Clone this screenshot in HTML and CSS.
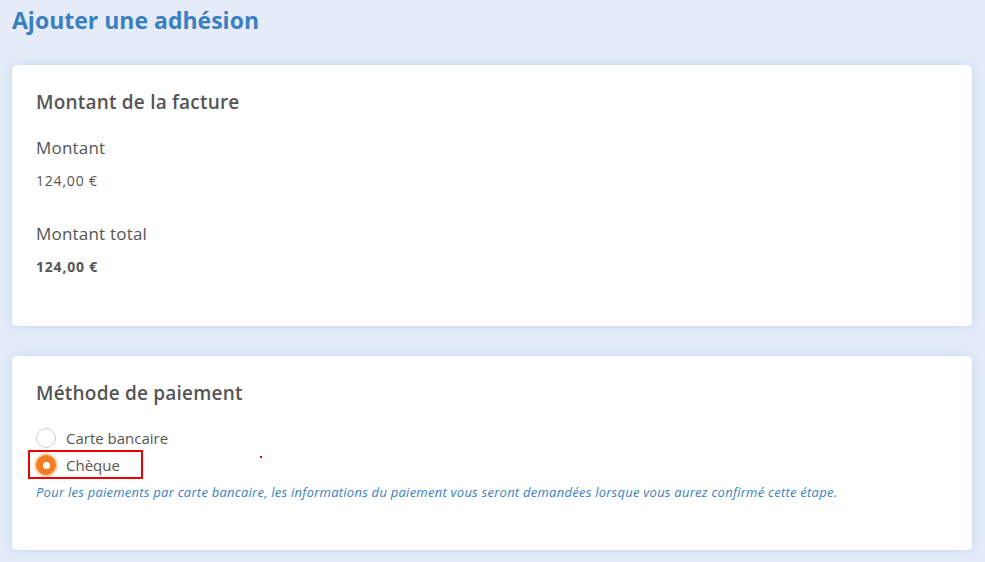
FILE: index.html
```html
<!DOCTYPE html>
<html lang="fr">
<head>
    <meta charset="UTF-8">
    <meta name="viewport" content="width=device-width, initial-scale=1.0">
    <title>Ajouter une adhésion</title>
    <link rel="stylesheet" href="styles.css">
</head>
<body>
    <div class="page">
        <h1 class="page-title">Ajouter une adhésion</h1>

        <!-- Montant -->
        <section class="card">
            <h2>Montant de la facture</h2>
            <div class="field">
                <div class="field-label">Montant</div>
                <div class="field-value">124,00 €</div>
            </div>
            <div class="field">
                <div class="field-label">Montant total</div>
                <div class="field-value strong">124,00 €</div>
            </div>
        </section>

        <!-- Paiement -->
        <section class="card card-pay">
            <h2>Méthode de paiement</h2>
            <div class="radios">
                <label class="radio">
                    <span class="radio-dot"></span>
                    <span>Carte bancaire</span>
                </label>
                <div class="radio-row">
                    <label class="radio checked focused">
                        <span class="radio-dot"></span>
                        <span>Chèque</span>
                    </label>
                    <span class="marker"></span>
                </div>
            </div>
            <p class="help">Pour les paiements par carte bancaire, les informations du paiement vous seront demandées lorsque vous aurez confirmé cette étape.</p>
        </section>
    </div>
</body>
</html>
```

FILE: styles.css
```css
body {
    margin: 0;
    font-family: "Open Sans", Lato, sans-serif;
    background: #e5ecf8;
    color: #555;
    height: 562px;
    overflow: hidden;
    background-image: radial-gradient(ellipse 900px 500px at 1250px 900px, #eef3fc 60%, rgba(238, 243, 252, 0) 61%);
}

.page {
    padding: 0 13px 0 12px;
}

.page-title {
    margin: 0;
    padding-top: 5px;
    height: 60px;
    font-size: 23px;
    font-weight: 700;
    color: #3a7fc0;
    line-height: 30px;
}

.card {
    background: #fff;
    border-radius: 5px;
    box-shadow: 0 0 12px rgba(190, 208, 240, 0.8);
    padding: 24px 24px 49px;
    margin-bottom: 30px;
}

.card h2 {
    margin: 0 0 21px;
    font-size: 19px;
    font-weight: 600;
    letter-spacing: 0.2px;
    line-height: 26px;
    color: #555;
}

.field + .field {
    margin-top: 31px;
}

.field-label {
    font-size: 17px;
    letter-spacing: 0.2px;
    line-height: 24px;
    margin-bottom: 11px;
}

.field-value {
    font-size: 14px;
    letter-spacing: 0.8px;
    line-height: 20px;
}

.field-value.strong {
    font-weight: 700;
}

.card-pay {
    padding-bottom: 50px;
}

.card-pay h2 {
    margin-bottom: 22px;
}

.radios {
    display: flex;
    flex-direction: column;
    gap: 7px;
}

.radio {
    display: flex;
    align-items: center;
    gap: 10px;
    font-size: 15px;
    color: #555;
    height: 20px;
}

.radio-dot {
    width: 18px;
    height: 18px;
    border: 1px solid #c9d0dc;
    border-radius: 50%;
    box-sizing: content-box;
}

.radio.checked .radio-dot {
    background: #f47c20;
    border-color: #f47c20;
    box-shadow: 0 0 0 2px #fbd6b6;
    position: relative;
}

.radio.checked .radio-dot::after {
    content: "";
    position: absolute;
    left: 6px;
    top: 6px;
    width: 7px;
    height: 7px;
    border-radius: 50%;
    background: #fff;
}

.radio-row {
    display: flex;
    align-items: center;
}

.radio.focused {
    outline: 2px solid #e00;
    outline-offset: 0;
    padding: 3px 21px 2px 6px;
    margin: -3px 0 -2px -6px;
}

.marker {
    width: 2px;
    height: 2px;
    background: #e00;
    margin-left: 119px;
    margin-top: -16px;
}

.help {
    margin: 9px 0 0;
    font-size: 13px;
    letter-spacing: 0.25px;
    font-style: italic;
    color: #3a7fc0;
    line-height: 16px;
}
```
